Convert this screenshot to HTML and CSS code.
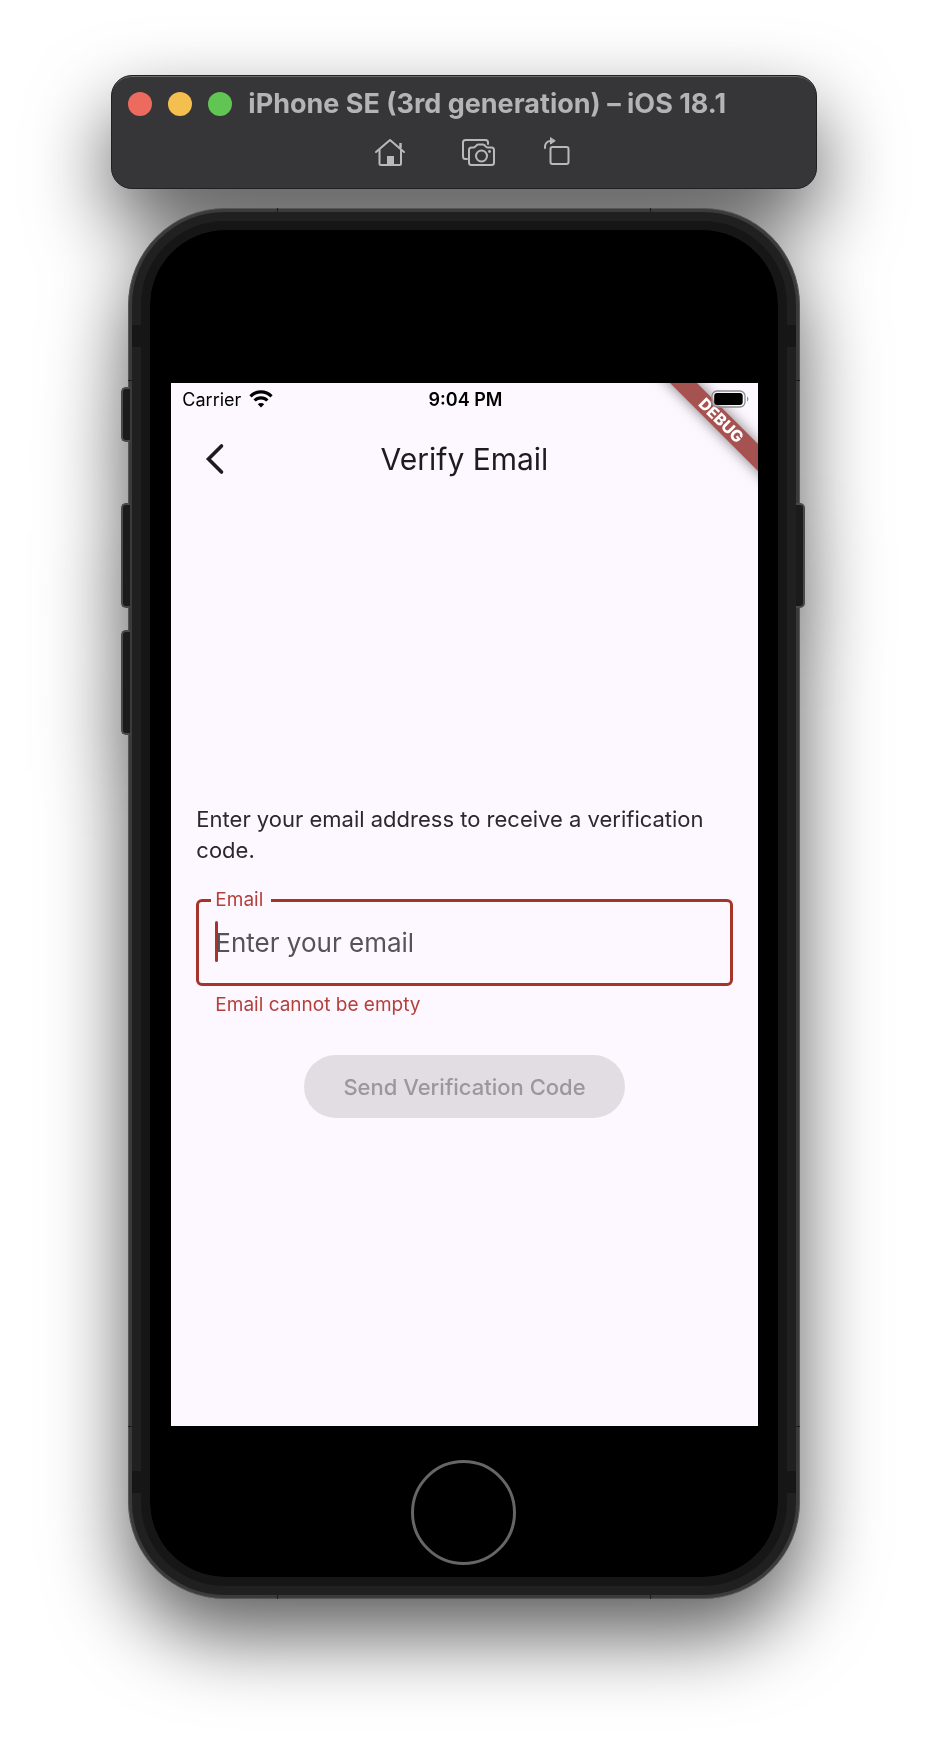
FILE: index.html
```html
<!DOCTYPE html>
<html lang="en">
<head>
<meta charset="utf-8">
<meta name="viewport" content="width=device-width, initial-scale=1">
<title>iPhone SE (3rd generation) – iOS 18.1</title>
<link rel="stylesheet" href="styles.css">
</head>
<body>
<div class="simulator">
  <header class="window">
    <div class="window-title">
      <button class="light light-close" aria-label="Close"></button>
      <button class="light light-minimize" aria-label="Minimize"></button>
      <button class="light light-zoom" aria-label="Zoom"></button>
      <h1 class="window-name">iPhone SE (3rd generation) – iOS 18.1</h1>
    </div>
    <div class="toolbar">
      <button class="tool" aria-label="Home">
        <svg width="44" height="32" viewBox="0 0 44 32" fill="none" stroke="currentColor" stroke-width="2" stroke-linecap="round" stroke-linejoin="round">
          <path d="M8 16 22 4l14 12"/>
          <path d="M11.500 14v13.500a1.500 1.500 0 0 0 1.500 1.500h18.500a1.500 1.500 0 0 0 1.500-1.500V14"/>
          <path d="M32.500 12V7" stroke-width="2.500" stroke-linecap="butt"/>
          <path d="M19 29.500v-9.500h7v9.500z" fill="currentColor" stroke="none"/>
        </svg>
      </button>
      <button class="tool" aria-label="Screenshot">
        <svg width="44" height="32" viewBox="0 0 44 32" fill="none" stroke="currentColor" stroke-width="2" stroke-linecap="round" stroke-linejoin="round">
          <path d="M16 23h-1.500a2.500 2.500 0 0 1-2.500-2.500v-14A2.500 2.500 0 0 1 14.500 4H34.500a2.500 2.500 0 0 1 2.500 2.500V8"/>
          <path d="M20.500 11.500h2.200c1.300 0 1.600-.8 2.300-1.700.6-.8 1.300-1.300 2.300-1.300h4.600c1 0 1.700.5 2.300 1.300.7.900 1 1.700 2.300 1.700h4a2.500 2.500 0 0 1 2.500 2.500v12.500a2.500 2.500 0 0 1-2.500 2.500h-20a2.500 2.500 0 0 1-2.500-2.500V14a2.500 2.500 0 0 1 2.500-2.500z"/>
          <circle cx="30.500" cy="20" r="5.500"/>
          <circle cx="38.500" cy="15.500" r="1.400" fill="currentColor" stroke="none"/>
        </svg>
      </button>
      <button class="tool" aria-label="Rotate">
        <svg width="44" height="32" viewBox="0 0 44 32" fill="none" stroke="currentColor" stroke-width="2" stroke-linecap="round" stroke-linejoin="round">
          <rect x="16.500" y="11" width="18" height="17" rx="2"/>
          <path d="M11 12v-1.500a5.500 5.500 0 0 1 5.500-5.500H17"/>
          <path d="M16.500 2v6l4.500-3z" fill="currentColor" stroke-width="1"/>
        </svg>
      </button>
    </div>
  </header>

  <div class="phone">
    <span class="key key-mute"></span>
    <span class="key key-up"></span>
    <span class="key key-down"></span>
    <span class="key key-side"></span>
    <div class="chassis">
      <div class="bezel">
        <main class="screen">
          <div class="debug-banner">DEBUG</div>
          <div class="status">
            <div class="carrier">
              <span>Carrier</span>
              <svg width="24" height="18" viewBox="0 0 24 18" fill="none" stroke="#000" stroke-width="3.200">
                <path d="M1.500 6.300a14.500 14.500 0 0 1 21 0"/>
                <path d="M5.600 10.500a9 9 0 0 1 12.800 0"/>
                <path d="M12 17.500 8.800 14.200a4.600 4.600 0 0 1 6.400 0z" fill="#000" stroke="none"/>
              </svg>
            </div>
            <time class="clock">9:04 PM</time>
            <svg class="battery" width="38" height="18" viewBox="0 0 38 18">
              <rect x="1" y="1" width="33" height="16" rx="5" fill="#fdf8ff" fill-opacity=".5" stroke="#8f8b91" stroke-width="1.300"/>
              <rect x="3.200" y="3" width="28.500" height="12" rx="3" fill="#000"/>
              <path d="M36 6.500c1.800.8 1.800 4.200 0 5z" fill="#8f8b91"/>
            </svg>
          </div>
          <nav class="appbar">
            <button class="back" aria-label="Back">
              <svg width="20" height="32" viewBox="0 0 20 32" fill="none" stroke="currentColor" stroke-width="3.600" stroke-linecap="round" stroke-linejoin="miter">
                <path d="M16.500 3 3.500 16l13 13"/>
              </svg>
            </button>
            <h2 class="appbar-title">Verify Email</h2>
          </nav>
          <form class="content">
            <p class="hint">Enter your email address to receive a verification code.</p>
            <fieldset class="field">
              <legend class="field-legend"><label for="email">Email</label></legend>
              <span class="caret"></span>
              <input class="field-input" id="email" type="email" placeholder="Enter your email" aria-describedby="email-error">
            </fieldset>
            <p class="error" id="email-error">Email cannot be empty</p>
            <button class="submit" type="submit" disabled>Send Verification Code</button>
          </form>
        </main>
        <button class="home" aria-label="Home button"></button>
      </div>
    </div>
  </div>
</div>
</body>
</html>
```
FILE: styles.css
```css
* {
  box-sizing: border-box;
}

body {
  margin: 0;
  padding: 75px 12% 148px;
  background: #fff;
  font-family: Inter, "Liberation Sans", sans-serif;
}

button {
  padding: 0;
  border: 0;
  background: none;
  font: inherit;
}

h1,
h2,
p {
  margin: 0;
}

.simulator {
  filter: drop-shadow(0 36px 40px rgba(0, 0, 0, 0.64));
}

/* Simulator title window */
.window {
  padding: 16px 16px 20px;
  border: 1px solid #1f2222;
  border-radius: 21px;
  background: #363638;
  box-shadow: inset 0 2px 0 -1px #6a6b6c;
}

.window-title {
  display: flex;
  align-items: center;
  gap: 16px;
  height: 24px;
}

.light {
  flex: none;
  width: 24px;
  height: 24px;
  border-radius: 50%;
}

.light-close { background: #ed6a5e; }
.light-minimize { background: #f5bf4f; }
.light-zoom { background: #61c554; }

.window-name {
  color: #b4b4b6;
  font-size: 27px;
  font-weight: 700;
  line-height: 24px;
  white-space: nowrap;
}

.toolbar {
  display: flex;
  justify-content: center;
  gap: 39px;
  padding: 20px 0 0 18px;
}

.tool {
  width: 44px;
  height: 32px;
  color: #b9b9bb;
}

.tool svg {
  display: block;
}

/* Phone body */
.phone {
  position: relative;
  margin: 19px 17px 0;
  padding: 3px;
  border: 1px solid #555657;
  border-radius: 97px;
  background: #3a3b3b;
}

.phone::before,
.phone::after {
  content: "";
  position: absolute;
}

.phone::before {
  inset: -1px 148px;
  border: solid #1c1c1c;
  border-width: 0 1px;
}

.phone::after {
  inset: 171px -1px;
  border: solid #1c1c1c;
  border-width: 1px 0;
}

.chassis {
  position: relative;
  z-index: 1;
  padding: 9px;
  border-radius: 93px;
  background: #202020;
}

.chassis::before {
  content: "";
  position: absolute;
  inset: 113px 0 102px;
  border: solid #161616;
  border-width: 22px 0;
}

.bezel {
  position: relative;
  display: flex;
  flex-direction: column;
  align-items: center;
  padding: 153px 20px 12px 21px;
  border: 9px solid #161616;
  border-radius: 84px;
  background: #000;
  background-clip: padding-box;
}

.key {
  position: absolute;
  z-index: 0;
  left: -8px;
  width: 9px;
  height: 105px;
  border: 2px solid #48494a;
  border-right: 0;
  border-radius: 5px 0 0 5px;
  background: #1b1b1b;
}

.key-mute { top: 178px; height: 55px; }
.key-up { top: 294px; }
.key-down { top: 421px; }

.key-side {
  top: 294px;
  right: -6px;
  left: auto;
  border-right: 2px solid #48494a;
  border-left: 0;
  border-radius: 0 5px 5px 0;
}

.home {
  width: 105px;
  height: 105px;
  margin: 34px 2px 0 0;
  border: 3px solid #666;
  border-radius: 50%;
}

/* App screen */
.screen {
  position: relative;
  display: flex;
  flex-direction: column;
  width: 100%;
  aspect-ratio: 375 / 667;
  overflow: hidden;
  background: #fdf8ff;
  color: #1d1b20;
}

.status {
  position: relative;
  display: grid;
  grid-template-columns: 1fr auto 1fr;
  align-items: center;
  height: 32px;
  padding: 0 9px 0 11px;
  color: #000;
  font-size: 18px;
}

.carrier {
  display: flex;
  align-items: center;
  gap: 8px;
}

.clock {
  font-weight: 600;
}

.battery {
  justify-self: end;
}

.debug-banner {
  position: absolute;
  top: 28px;
  right: -43px;
  width: 160px;
  height: 19px;
  background: #a65251;
  box-shadow: 0 0 14px rgba(0, 0, 0, 0.5);
  color: #fff;
  font-size: 16px;
  font-weight: 800;
  line-height: 19px;
  text-align: center;
  transform: rotate(45deg);
}

.appbar {
  display: grid;
  grid-template-columns: 1fr auto 1fr;
  align-items: center;
  height: 88px;
  padding: 0 34px;
}

.back {
  width: 20px;
  height: 32px;
  color: #1d1b20;
}

.back svg {
  display: block;
}

.appbar-title {
  font-size: 30px;
  font-weight: 400;
}

.content {
  display: flex;
  flex: 1;
  flex-direction: column;
  align-items: center;
  justify-content: center;
  padding: 0 25px;
}

.hint {
  width: 100%;
  color: #2b292e;
  font-size: 22px;
  line-height: 31px;
}

.field {
  position: relative;
  width: 100%;
  min-width: 0;
  margin: 22px 0 0;
  padding: 0 16px;
  border: 3px solid #a5342b;
  border-radius: 6px;
}

.field-legend {
  margin-left: -4px;
  padding: 0 8px 0 4px;
  color: #b3403a;
  font-size: 19px;
  line-height: 24px;
}

.field-input {
  display: block;
  width: 100%;
  height: 71px;
  padding: 0 0 10px;
  border: 0;
  outline: 0;
  background: none;
  color: #1d1b20;
  font: inherit;
  font-size: 26px;
}

.field-input::placeholder {
  color: #56525a;
  opacity: 1;
}

.caret {
  position: absolute;
  top: 9px;
  left: 16px;
  width: 3px;
  height: 41px;
  border-radius: 2px;
  background: #a5342b;
}

.error {
  width: 100%;
  padding: 7px 19px 0;
  color: #b3403a;
  font-size: 19px;
  line-height: 24px;
}

.submit {
  height: 63px;
  margin: 38px 0 6px;
  padding: 0 39px;
  border-radius: 32px;
  background: #e2dde3;
  color: #9c979e;
  font-size: 22px;
  font-weight: 500;
}
```
